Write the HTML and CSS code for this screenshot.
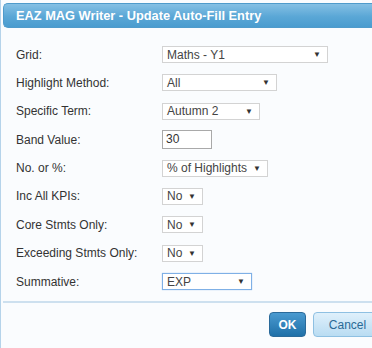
FILE: index.html
```html
<!DOCTYPE html>
<html>
<head>
    <title>EAZ MAG Writer - Update Auto-Fill Entry</title>
    <link rel="stylesheet" href="styles.css">
</head>
<body>
    <div class="dialog">
        <div class="titlebar">EAZ MAG Writer - Update Auto-Fill Entry</div>
        <div class="form">
            <label class="label">Grid:</label>
            <div class="select w-grid"><span>Maths - Y1</span><span class="arrow">&#9660;</span></div>

            <label class="label">Highlight Method:</label>
            <div class="select w-method"><span>All</span><span class="arrow">&#9660;</span></div>

            <label class="label">Specific Term:</label>
            <div class="select w-term"><span>Autumn 2</span><span class="arrow">&#9660;</span></div>

            <label class="label">Band Value:</label>
            <div class="input">30</div>

            <label class="label">No. or %:</label>
            <div class="select w-pct"><span>% of Highlights</span><span class="arrow">&#9660;</span></div>

            <label class="label">Inc All KPIs:</label>
            <div class="select w-no"><span>No</span><span class="arrow">&#9660;</span></div>

            <label class="label">Core Stmts Only:</label>
            <div class="select w-no"><span>No</span><span class="arrow">&#9660;</span></div>

            <label class="label">Exceeding Stmts Only:</label>
            <div class="select w-no"><span>No</span><span class="arrow">&#9660;</span></div>

            <label class="label">Summative:</label>
            <div class="select w-sum focus"><span>EXP</span><span class="arrow">&#9660;</span></div>
        </div>
        <div class="buttons">
            <button type="button" class="btn btn-ok">OK</button>
            <button type="button" class="btn btn-cancel">Cancel</button>
        </div>
    </div>
</body>
</html>
```

FILE: styles.css
```css
body {
    margin: 0;
    background: #fff;
    font-family: "Liberation Sans", Arial, sans-serif;
    font-size: 12px;
    color: #333;
}
.dialog {
    border-left: 1px solid #b5d3ea;
    background-color: #fafcfe;
    padding: 3px 0 0 2px;
    height: 345px;
}
.titlebar {
    background: linear-gradient(#85c0e4, #5aa7d6 55%, #4a9ccf);
    border: 1px solid #4f9bcb;
    border-right: 0;
    border-radius: 5px 0 0 5px;
    color: #fff;
    font-weight: bold;
    font-size: 12.8px;
    height: 23px;
    line-height: 23px;
    padding-left: 12px;
}
.form {
    display: grid;
    grid-template-columns: 146px 1fr;
    grid-auto-rows: 17px;
    row-gap: 11.4px;
    align-items: center;
    padding: 18px 0 0 13px;
}
.label {
    color: #333;
    font-size: 12px;
}
.select {
    box-sizing: border-box;
    height: 17px;
    background-color: #fff;
    border: 1px solid #d3d3d3;
    display: flex;
    align-items: center;
    justify-content: space-between;
    padding: 0 6px 0 4px;
    color: #444;
    font-size: 12px;
}
.arrow {
    font-size: 8px;
    color: #333;
}
.w-grid { width: 166px; }
.w-method { width: 115px; }
.w-term { width: 98px; }
.w-pct { width: 106px; }
.w-no { width: 41px; }
.w-sum { width: 90px; }
.focus {
    border-color: #7fb0e6;
    box-shadow: 0 0 1px #9cc4ee;
}
.input {
    box-sizing: border-box;
    width: 50px;
    height: 19px;
    background-color: #fff;
    border: 1px solid #a9a9a9;
    padding: 0 3px;
    line-height: 17px;
    color: #333;
}
.buttons {
    margin-top: 11px;
    border-top: 2px solid #cde0ef;
    display: flex;
    justify-content: flex-end;
    gap: 7px;
    padding-top: 9px;
    margin-right: -10px;
}
.btn {
    height: 25px;
    border-radius: 4px;
    font-family: "Liberation Sans", Arial, sans-serif;
    font-size: 12px;
    cursor: pointer;
}
.btn-ok {
    width: 37px;
    background: linear-gradient(#4a9ad0, #1f70a8);
    border: 1px solid #2a6a9a;
    color: #fff;
    font-weight: bold;
}
.btn-cancel {
    width: 69px;
    background: linear-gradient(#dff0fb, #b9dcf2);
    border: 1px solid #8ec0e2;
    color: #2a6a96;
}
```
